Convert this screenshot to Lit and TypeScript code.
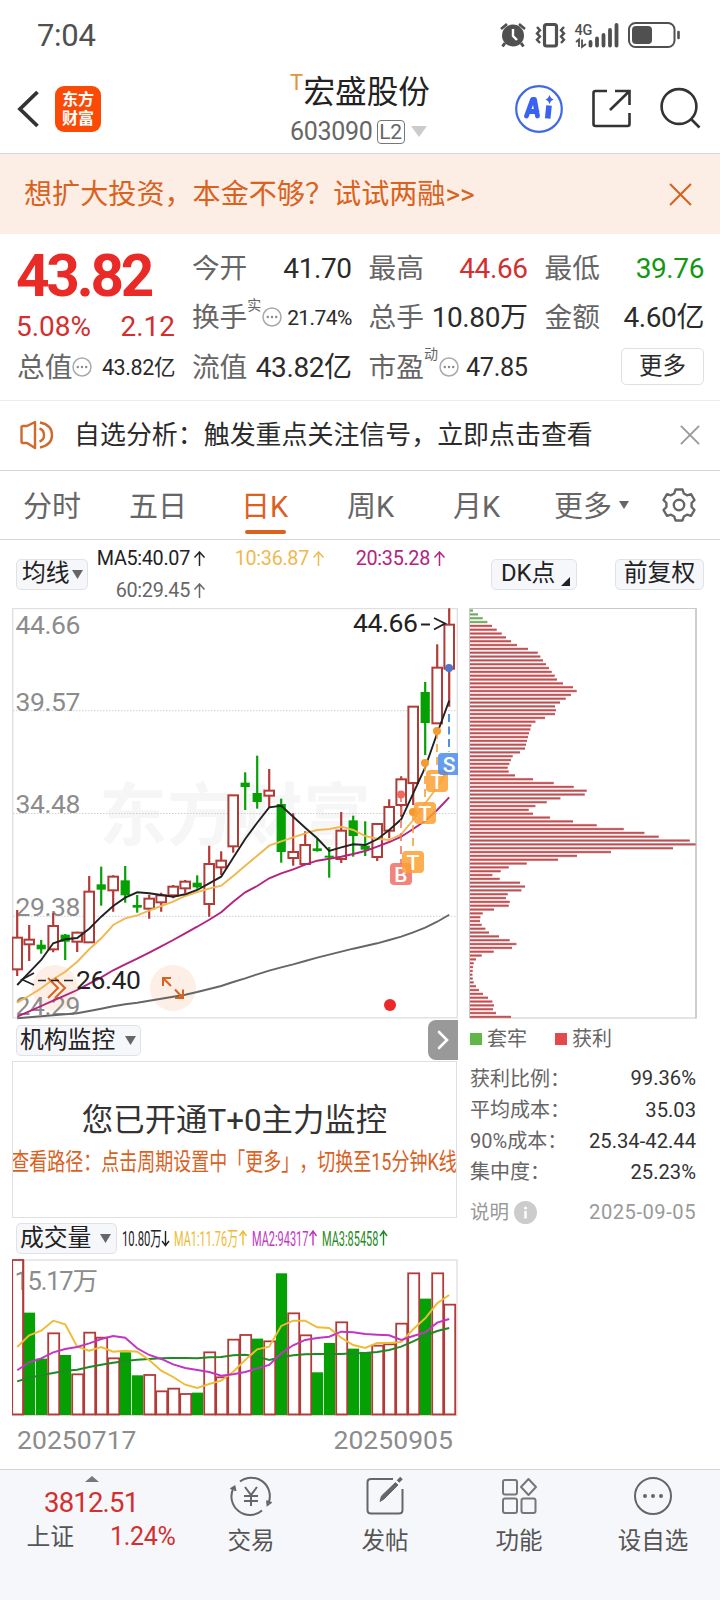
import { LitElement, html, svg, css } from "lit";
import { customElement } from "lit/decorators.js";

type Candle = [high: number, top: number, bottom: number, low: number, up: 0 | 1];

// Candle geometry in thirds of a pixel below y = 600.
const CANDLES: Candle[] = [
  [930, 1013, 1108, 1128, 1], [975, 1019, 1033, 1083, 1], [1020, 1034, 1048, 1061, 0],
  [938, 978, 1048, 1057, 1], [1002, 1004, 1025, 1080, 0], [995, 998, 1025, 1056, 1],
  [828, 875, 1027, 1027, 1], [800, 853, 869, 917, 0], [826, 830, 871, 935, 1],
  [798, 841, 886, 908, 0], [885, 915, 923, 938, 0], [884, 896, 926, 956, 1],
  [878, 886, 907, 935, 1], [855, 860, 886, 895, 1], [840, 845, 865, 880, 1],
  [826, 848, 862, 866, 0], [737, 792, 912, 950, 1], [754, 782, 802, 825, 1],
  [586, 586, 739, 758, 1], [517, 548, 561, 630, 0], [467, 579, 606, 626, 0],
  [507, 572, 587, 622, 1], [596, 612, 756, 788, 0], [640, 756, 774, 797, 1],
  [694, 735, 792, 795, 1], [715, 745, 753, 755, 0], [741, 767, 773, 833, 0],
  [636, 692, 777, 789, 1], [647, 661, 708, 770, 0], [664, 737, 749, 768, 0],
  [672, 672, 771, 783, 1], [598, 621, 692, 715, 1], [529, 538, 615, 650, 1],
  [320, 320, 549, 615, 1], [246, 276, 369, 465, 0], [133, 203, 370, 370, 1],
  [25, 74, 206, 320, 1],
];

const MA5 = [1155, 1117, 1080, 1030, 1018, 1014, 986, 950, 918, 893, 877, 880, 885, 890, 883, 870, 850, 830, 773, 717, 668, 622, 617, 650, 683, 715, 753, 742, 733, 735, 718, 690, 658, 580, 502, 400, 302];
const MA10 = [1208, 1187, 1165, 1138, 1115, 1085, 1048, 1015, 975, 955, 946, 932, 918, 905, 888, 876, 866, 857, 828, 797, 767, 737, 724, 712, 700, 690, 687, 680, 690, 708, 716, 720, 703, 660, 610, 562, 500];
const MA20 = [1250, 1234, 1218, 1202, 1186, 1170, 1151, 1132, 1111, 1093, 1076, 1058, 1039, 1020, 1000, 980, 959, 937, 905, 877, 858, 835, 820, 808, 794, 782, 776, 770, 762, 753, 740, 726, 710, 687, 662, 630, 592];
const MA60 = [1255, 1252, 1249, 1246, 1243, 1240, 1233, 1226, 1219, 1213, 1208, 1202, 1196, 1190, 1184, 1176, 1167, 1158, 1146, 1135, 1123, 1112, 1102, 1093, 1083, 1073, 1064, 1055, 1046, 1038, 1030, 1020, 1010, 997, 983, 965, 944];

const PROFILE = [
  39, 54, 68, 82, 96, 110, 125, 138, 153, 171, 204, 233, 241, 249, 258, 267, 275, 284, 291, 309,
  339, 350, 333, 317, 300, 285, 288, 285, 255, 226, 214, 211, 207, 204, 201, 198, 195, 180, 158, 153,
  148, 143, 146, 165, 219, 281, 341, 380, 374, 301, 260, 226, 206, 219, 270, 339, 410, 491, 553, 596,
  689, 707, 639, 453, 351, 294, 200, 146, 122, 97, 119, 180, 195, 184, 143, 138, 149, 146, 102, 68,
  61, 60, 65, 76, 87, 117, 149, 169, 156, 101, 65, 48, 41, 39, 38, 37, 38, 41, 48, 57,
  69, 84, 97, 102, 99, 108, 153,
];

// Volume bar tops in thirds of a pixel below y = 1250.
const VOLUME = [30, 190, 328, 250, 317, 373, 248, 263, 325, 309, 378, 375, 424, 416, 432, 430, 307, 382, 269, 255, 268, 274, 72, 190, 256, 369, 281, 217, 298, 308, 287, 283, 221, 70, 148, 70, 164];
const VOL_DOWN = new Set([1, 2, 4, 9, 10, 15, 20, 22, 25, 26, 28, 29, 34]);
const VMA1 = [291, 256, 242, 212, 223, 290, 302, 291, 305, 302, 305, 330, 362, 381, 404, 414, 402, 392, 365, 330, 298, 290, 228, 212, 212, 232, 234, 263, 285, 294, 279, 279, 276, 238, 205, 160, 135];
const VMA2 = [361, 337, 325, 307, 297, 291, 280, 267, 258, 263, 295, 315, 327, 343, 354, 360, 366, 377, 373, 366, 355, 345, 310, 286, 270, 264, 260, 245, 247, 252, 254, 256, 270, 258, 247, 218, 207];
const VMA3 = [394, 383, 376, 369, 362, 359, 351, 344, 338, 333, 329, 327, 325, 324, 324, 325, 322, 321, 316, 314, 320, 330, 322, 316, 313, 312, 312, 312, 310, 309, 306, 300, 290, 274, 257, 243, 234];

const cx = (i: number) => 17.2 + 12 * i;
const line = (ys: number[], base: number) =>
  ys.map((y, i) => `${cx(i).toFixed(1)},${(base + y / 3).toFixed(1)}`).join(" ");

const RED = "#b23b38";
const GREEN = "#04a004";

const base = css`
  * { box-sizing: border-box; }
  svg { display: block; flex: none; }
  text { font-family: Roboto, "Noto Sans CJK SC", sans-serif; }
`;

@customElement("kline-chart")
class KlineChart extends LitElement {
  static styles = [base, css`
    :host { display: block; }
    .axis { font-size: 26.5px; fill: #8c8c8c; }
    .mark { font-size: 26.5px; fill: #222; }
    .water { font-size: 68px; font-weight: 700; fill: #f6f6f7; }
    .tag { font-size: 21px; font-weight: 500; fill: #fff; text-anchor: middle; }
  `];

  private candle([h, t, b, l, up]: Candle, i: number) {
    const x = cx(i);
    const Y = (v: number) => 600 + v / 3;
    if (!up) {
      return svg`<path d="M${x} ${Y(h)}V${Y(l)}" stroke=${GREEN} stroke-width="2.200"/>
        <rect x=${x - 4.6} y=${Y(t)} width="9.2" height=${Y(b) - Y(t)} fill=${GREEN}/>`;
    }
    return svg`<path d="M${x} ${Y(h)}V${Y(t)}M${x} ${Y(b)}V${Y(l)}" stroke=${RED} stroke-width="2.200"/>
      <rect x=${x - 4.8} y=${Y(t)} width="9.6" height=${Math.max(Y(b) - Y(t), 1)} fill="#fff" stroke=${RED} stroke-width="2"/>`;
  }

  private tag(x: number, y: number, c: string, t: string) {
    return svg`<rect x=${x - 11} y=${y - 11} width="22" height="22" rx="4" fill=${c} fill-opacity=".85"/>
      <text class="tag" x=${x} y=${y + 7.5}>${t}</text>`;
  }

  render() {
    return html`<svg width="446" height="412" viewBox="12 608 446 412" fill="none">
      <text class="water" x="99" y="840" textLength="272">东方财富</text>
      <rect x="12.7" y="608.5" width="444.6" height="409.3" stroke="#e0e0e0" stroke-width="1.4"/>
      ${[710.7, 813.5, 916.3].map((y) => svg`<path d="M13 ${y}H457" stroke="#cfcfcf" stroke-dasharray="1.5 1.5"/>`)}
      <circle cx="55" cy="988" r="23" fill="#fdeee6"/>
      <circle cx="173" cy="988" r="23" fill="#fdeee6"/>
      ${["44.66", "39.57", "34.48", "29.38", "24.29"].map((t, i) =>
        svg`<text class="axis" x="15.500" y=${[634, 711, 813, 916, 1015][i]} textLength="65">${t}</text>`)}
      ${CANDLES.map((c, i) => this.candle(c, i))}
      <polyline points=${line(MA60, 600)} stroke="#666" stroke-width="1.9"/>
      <polyline points=${line(MA20, 600)} stroke="#b3237f" stroke-width="1.9"/>
      <polyline points=${line(MA10, 600)} stroke="#f0b850" stroke-width="1.9"/>
      <polyline points=${line(MA5, 600)} stroke="#222" stroke-width="1.9"/>
      <path d="M48 978L58 988L48 998M55 978L65 988L55 998" stroke="#d9621f" stroke-width="2"/>
      <path d="M171 986L163 978M163 986V978H171M175 989.500L183 998M183 989.500V998H175" stroke="#d9621f" stroke-width="2"/>
      <path d="M34 973L22 979.500L34 985M38 980.500H46M51 980.500H59M64 980.500H73" stroke="#222" stroke-width="1.7"/>
      <text class="mark" x="76" y="988.500" textLength="65">26.40</text>
      <text class="mark" x="353" y="632" textLength="65">44.66</text>
      <path d="M421 624.500H430M434 618L445 623.500L434 629.500" stroke="#222" stroke-width="1.9"/>
      <path d="M401 794V864" stroke="#ea7468" stroke-width="1.6" stroke-dasharray="8 5"/>
      <path d="M413 812V852M425 763V802M437 731V770" stroke="#f2a03c" stroke-width="1.6" stroke-dasharray="8 5"/>
      <path d="M449 714V752" stroke="#5090dd" stroke-width="2" stroke-dasharray="8 4.500"/>
      <circle cx="401" cy="794.500" r="4" fill="#f0695e"/>
      <circle cx="413" cy="812" r="4" fill="#f59a2c"/>
      <circle cx="425" cy="763" r="4" fill="#f59a2c"/>
      <circle cx="437" cy="731" r="4" fill="#f59a2c"/>
      <circle cx="449" cy="668" r="4" fill="#4f74c8"/>
      ${this.tag(401, 874, "#ee7064", "B")}
      ${this.tag(413, 862, "#fda033", "T")}
      ${this.tag(425, 813, "#fda033", "T")}
      ${this.tag(437, 781, "#fda033", "T")}
      ${this.tag(449, 764, "#4b8ceb", "S")}
      <circle cx="390" cy="1005" r="6" fill="#ec2828"/>
    </svg>`;
  }
}

@customElement("cost-profile")
class CostProfile extends LitElement {
  static styles = [base, css`:host { display: block; }`];
  render() {
    return html`<svg width="229" height="412" viewBox="469 608 229 412" fill="none">
      <path d="M696 608V1018.500" stroke="#c9c9cb" stroke-width="1.8"/>
      <path d="M696 608.500H469.500V1018H696" stroke="#c9c9cb" stroke-width="1"/>
      ${PROFILE.map((v, i) => {
        const y = 610.5 + (i * 11.5) / 3;
        const w = (v - 30) / 3;
        return svg`<rect x="470" y=${y - 1.3} width=${w} height="2.700" fill=${i < 4 ? "#b9dcae" : "#eeb4b4"}/>
          <rect x="470" y=${y - 0.8} width=${w} height="1.700" fill=${i < 4 ? "#74a866" : "#bd5054"}/>`;
      })}
    </svg>`;
  }
}

@customElement("volume-chart")
class VolumeChart extends LitElement {
  static styles = [base, css`
    :host { display: block; }
    .axis { font-size: 25.5px; fill: #8c8c8c; }
  `];
  render() {
    return html`<svg width="446" height="157" viewBox="12 1259 446 157" fill="none">
      <rect x="12.7" y="1260" width="444.300" height="155" stroke="#e0e0e0" stroke-width="1.4"/>
      <path d="M12 1415.200H457" stroke="#ecc9c5"/>
      ${VOLUME.map((v, i) => {
        const y = 1250 + v / 3;
        const x = cx(i) + 0.3;
        return VOL_DOWN.has(i)
          ? svg`<rect x=${x - 5.6} y=${y - 0.7} width="11.200" height=${1415 - y + 0.7} fill=${GREEN}/>`
          : svg`<rect x=${x - 5.3} y=${y} width="11" height=${1414.4 - y} fill="#fff" stroke=${RED} stroke-width="1.800"/>`;
      })}
      <text class="axis" x="14.500" y="1289.500" textLength="83.500">15.17万</text>
      <path d="M23.300 1260V1415" stroke=${RED} stroke-width="1.800"/>
      <polyline points=${line(VMA3, 1250)} stroke="#1f8a24" stroke-width="1.900"/>
      <polyline points=${line(VMA1, 1250)} stroke="#eebb33" stroke-width="1.900"/>
      <polyline points=${line(VMA2, 1250)} stroke="#c235c2" stroke-width="1.900"/>
    </svg>`;
  }
}

const dots = html`<svg class="dots" width="20" height="20" viewBox="0 0 20 20">
  <circle cx="10" cy="10" r="9" fill="none" stroke="#aaa" stroke-width="1.5"/>
  <circle cx="5.800" cy="10" r="1.200" fill="#888"/><circle cx="10" cy="10" r="1.200" fill="#888"/><circle cx="14.200" cy="10" r="1.200" fill="#888"/>
</svg>`;

@customElement("app-root")
class AppRoot extends LitElement {
  static styles = [base, css`
    :host { display: block; width: 720px; height: 1600px; background: #fff; overflow: hidden; position: relative;
      font-family: Roboto, "Noto Sans CJK SC", sans-serif; color: #2b2b2b; line-height: 1; white-space: nowrap; }
    .page { display: flex; flex-direction: column; height: 1600px; }
    .row { display: flex; align-items: center; }
    .between { display: flex; align-items: center; justify-content: space-between; }
    .red { color: #d32f2f; } .green { color: #139813; }

    .status { height: 68px; padding: 2px 38px 0 37px; color: #505050; font-size: 31px; letter-spacing: -.3px; }

    .header { height: 86px; border-bottom: 1px solid #d6d6d6; display: grid; grid-template-columns: 290px 1fr 222px; padding-top: 3px; }
    .left { display: flex; align-items: center; padding-left: 17px; height: 75px; gap: 15px; }
    .logo { width: 46px; height: 46px; border-radius: 9px; background: #fb4a05; color: #fff; font-size: 16px; font-weight: 700;
      line-height: 19px; text-align: center; padding-top: 4px; white-space: normal; }
    .name { display: flex; font-size: 31.600px; line-height: 36px; color: #222; padding-top: 4px; }
    .name i { font-style: normal; font-size: 22px; line-height: 16px; color: #e8923a; width: 13.500px; }
    .code { display: flex; align-items: center; font-size: 25px; color: #666; height: 41px; letter-spacing: -.3px; }
    .l2 { border: 1.500px solid #777; border-radius: 4px; font-size: 21px; width: 28px; height: 24px; line-height: 22px; text-align: center; margin: 0 6px 0 4px; }
    .tools { display: flex; align-items: center; gap: 27px; height: 75px; padding-left: 16px; }

    .banner { height: 80px; background: #fdeee5; color: #d9621f; font-size: 28.100px; padding: 0 28px 0 24px; }
    .banner span { padding-top: 3px; }

    .quotes { height: 167px; border-bottom: 1px solid #ececec; padding: 10px 16px 0 17px; display: grid;
      grid-template-columns: 158px 159.800px 159px 1fr; column-gap: 16.900px; grid-template-rows: 49.500px 49.500px 49.500px; }
    .price { grid-row: span 2; padding-top: 7px; }
    .big { font-size: 58.500px; font-weight: 700; color: #e92a27; letter-spacing: -3.200px; line-height: 50px; margin-left: -1px; }
    .chg { font-size: 28px; line-height: 51px; }
    .chg span { margin-left: -1px; }
    .cell { display: flex; align-items: center; font-size: 28px; }
    .cell b { font-weight: 400; margin-left: auto; letter-spacing: -.4px; }
    .cell span { color: #666; font-size: 27.700px; }
    .cell sup { font-size: 14px; color: #666; align-self: flex-start; margin: 4px 0 0; width: 15px; line-height: 14px; }
    .cell svg { margin-top: -2px; }
    .cell b.s22 { font-size: 21.500px; } .cell b.s21 { font-size: 21px; letter-spacing: -.6px; } .cell b.s25 { font-size: 25.300px; }
    .more { justify-self: end; align-self: center; width: 83px; height: 37px; border: 1.500px solid #e0e0e0; border-radius: 5px;
      font-size: 23.500px; line-height: 34px; text-align: center; margin-top: -2px; }

    .notice { height: 70px; border-bottom: 1px solid #d6d6d6; padding: 0 20px 2px 20px; font-size: 25.950px; }
    .notice .msg { flex: 1; margin-left: 20px; padding-top: 2px; }

    .tabs { height: 69px; border-bottom: 1px solid #d6d6d6; display: flex; align-items: center; font-size: 29px; color: #666; padding-left: 23px; }
    .tabs span { flex: none; padding-top: 4px; }
    .t1 { width: 106px; } .t2 { width: 112px; } .t3 { width: 106px; color: #d9621f; position: relative; }
    .t3::after { content: ""; position: absolute; left: 4px; bottom: -12px; width: 41px; height: 4px; border-radius: 2px; background: #d9621f; }
    .t4 { width: 106px; } .t5 { width: 101px; } .t6 { width: 65px; }

    .btn { border: 1.500px solid #e0e2e6; border-radius: 5px; background: #f6f7fa; height: 31px; display: flex; align-items: center;
      font-size: 23.800px; color: #222; flex: none; }
    .mas { height: 68px; padding: 0 16px; display: flex; align-items: center; }
    .vals { display: grid; grid-template-columns: 119px 121px 96px; row-gap: 12px; font-size: 19.800px; letter-spacing: -.3px; width: 393px; padding: 2px 0 0 9px; color: #222; }
    .vals span { display: flex; gap: 3px; width: 109px; justify-content: flex-end; }
    .vals svg { margin-top: 2px; }
    .yel { color: #eeb94f; } .mag { color: #b3237f; } .gry { color: #666; }

    .body { display: grid; grid-template-columns: 446px 229px; column-gap: 11px; padding-left: 12px; }
    .inst { height: 41px; padding-left: 4px; }
    .next { width: 30px; height: 40px; background: #999; border-radius: 8px 0 0 8px; display: grid; place-items: center; margin-top: -1px; }
    .promo { height: 157px; border: 1.500px solid #e0e0e0; display: flex; flex-direction: column; align-items: center; overflow: hidden; width: 445px; }
    .promo h2 { font-weight: 400; font-size: 31.400px; line-height: 36px; margin: 41px 0 0; color: #333; }
    .promo p { font-size: 24px; line-height: 30px; margin: 8px 0 0; color: #d9621f; transform: scaleX(.75); text-spacing-trim: space-all; }
    .volhead { height: 41px; padding-left: 4px; }
    .cond text { font-size: 20.500px; }
    .dates { padding: 8px 5px 0 5px; align-items: flex-start; font-size: 26.500px; color: #8c8c8c; letter-spacing: .05px; line-height: 32px; height: 53px; }

    .side { font-size: 20px; color: #666; width: 227px; padding-left: 1px; }
    .legend { height: 38px; gap: 5px; }
    .legend i { width: 12px; height: 12px; background: #5fb748; }
    .legend i.r { background: #e5484a; margin-left: 23px; }
    .stats { padding-top: 5px; }
    .stat { height: 31.200px; }
    .stat b { font-weight: 400; color: #333; font-size: 20.200px; }
    .stat.note { height: 49px; color: #999; font-size: 19.500px; }
    .stat.note b { color: #999; letter-spacing: .5px; }
    .note svg { margin-left: 5px; }

    .bar { margin-top: auto; height: 131px; background: #f6f7fa; border-top: 1.500px solid #d4d5d8; display: grid; grid-template-columns: 184px repeat(4, 134px); }
    .index { display: flex; flex-direction: column; align-items: center; padding-top: 6px; }
    .index .pt { font-size: 27.500px; letter-spacing: -.8px; line-height: 30px; margin-top: 6px; width: 96px; }
    .index .ln { width: 149px; font-size: 23.800px; line-height: 36px; color: #555; display: flex; justify-content: space-between; margin-left: 18px; padding-top: 1px; }
    .index .ln .red { font-size: 25px; letter-spacing: -.3px; }
    .nav { display: flex; flex-direction: column; align-items: center; padding-top: 6px; font-size: 23.500px; color: #555; gap: 12px; }
    .nav span { line-height: 26px; }
  `];

  private up(c: string) {
    return html`<svg width="13" height="15" viewBox="0 0 13 15" fill="none" stroke=${c} stroke-width="1.500"><path d="M6.500 15V1M1.500 6.500L6.500 1L11.500 6.500"/></svg>`;
  }

  private tri(w: number, h: number, c: string) {
    return html`<svg width=${w} height=${h} viewBox="0 0 10 10" preserveAspectRatio="none"><path d="M0 0H10L5 10Z" fill=${c}/></svg>`;
  }

  private cond(x: number, k: number, c: string, t: string) {
    return svg`<text transform="translate(${x} 18.5) scale(${k} 1)" fill=${c}>${t}</text>`;
  }

  private close(c: string, s: number) {
    return html`<svg width=${s} height=${s} viewBox="0 0 22 22" stroke=${c} stroke-width="2"><path d="M1 1L21 21M21 1L1 21"/></svg>`;
  }

  render() {
    return html`<div class="page">
      <div class="status between">
        <span>7:04</span>
        <svg width="183" height="30" viewBox="499 19 183 30" fill="none">
          <circle cx="513" cy="34.500" r="11" fill="#505050"/>
          <path d="M501 28L507 23M525 28L519 23" stroke="#505050" stroke-width="2.600"/>
          <path d="M505 42L502.500 45.500M521 42L523.500 45.500" stroke="#505050" stroke-width="3"/>
          <path d="M513 28V35L517 39" stroke="#fff" stroke-width="2.400"/>
          <rect x="544.500" y="23.500" width="12" height="21.500" rx="2" stroke="#505050" stroke-width="3.200"/>
          <path d="M537 26l3 3.200l-3 3.200l3 3.200l-3 3.200l3 3.200M564 26l-3 3.200l3 3.200l-3 3.200l3 3.200l-3 3.200" stroke="#505050" stroke-width="2.400"/>
          <text x="574.500" y="33.500" font-size="15.500" font-weight="500" fill="#505050" textLength="17.500" lengthAdjust="spacingAndGlyphs">4G</text>
          <path d="M576 41L579 38.500V46M582 38.500V46L586 43" stroke="#505050" stroke-width="1.800"/>
          <path d="M590.500 41V44.500M597 37.500V44.500M603.500 34V44.500M610 29V44.500M616.500 24V44.500" stroke="#505050" stroke-width="3.800" stroke-linecap="round"/>
          <rect x="629" y="22" width="45.500" height="24" rx="6.500" stroke="#505050" stroke-width="2"/>
          <rect x="632" y="25" width="20" height="18" rx="4" fill="#505050"/>
          <path d="M678.500 31V37" stroke="#505050" stroke-width="2.600" stroke-linecap="round"/>
        </svg>
      </div>

      <div class="header">
        <div class="left">
          <svg width="23" height="38" viewBox="0 0 23 38" fill="none" stroke="#333" stroke-width="3.800"><path d="M20.500 2L3 19L20.500 36"/></svg>
          <div class="logo">东方<br>财富</div>
        </div>
        <div>
          <div class="name"><i>T</i>宏盛股份</div>
          <div class="code">603090<span class="l2">L2</span>${this.tri(16, 11, "#ccc")}</div>
        </div>
        <div class="tools">
          <svg width="50" height="50" viewBox="514 84 50 50" fill="none">
            <circle cx="539" cy="109" r="22.800" stroke="#3f68e6" stroke-width="2.200"/>
            <path d="M526.500 116L532.500 99.500H534.500L537.500 116M529 111.500H537" stroke="#3a62f0" stroke-width="4.800" stroke-linejoin="round" stroke-linecap="round"/>
            <path d="M549 105.500L547.700 118.500" stroke="#3a62f0" stroke-width="5.600"/>
            <path d="M549.500 95L551 98L553.500 99.500L551 101L549.500 104L548 101L545.500 99.500L548 98Z" fill="#3a62f0"/>
          </svg>
          <svg width="41" height="41" viewBox="0 0 41 41" fill="none" stroke="#333" stroke-width="2.600">
            <path d="M16 3H4.500Q2.500 3 2.500 5V36Q2.500 38 4.500 38H36.500Q38.500 38 38.500 36V25M24 3H38.500V17M38 3.500L19 22"/>
          </svg>
          <svg width="43" height="43" viewBox="0 0 43 43" fill="none" stroke="#333" stroke-width="2.600">
            <circle cx="20" cy="19.500" r="17.400"/><path d="M31.500 31.500L40.500 40.500"/>
          </svg>
        </div>
      </div>

      <div class="banner between"><span>想扩大投资，本金不够？试试两融&gt;&gt;</span>${this.close("#d9621f", 23)}</div>

      <div class="quotes">
        <div class="price">
          <div class="big">43.82</div>
          <div class="chg red between"><span>5.08%</span><span>2.12</span></div>
        </div>
        <div class="cell"><span>今开</span><b>41.70</b></div>
        <div class="cell"><span>最高</span><b class="red">44.66</b></div>
        <div class="cell"><span>最低</span><b class="green">39.76</b></div>
        <div class="cell"><span>换手</span><sup>实</sup>${dots}<b class="s21">21.74%</b></div>
        <div class="cell"><span>总手</span><b>10.80万</b></div>
        <div class="cell"><span>金额</span><b>4.60亿</b></div>
        <div class="cell"><span>总值</span>${dots}<b class="s22">43.82亿</b></div>
        <div class="cell"><span>流值</span><b>43.82亿</b></div>
        <div class="cell"><span>市盈</span><sup>动</sup>${dots}<b class="s25">47.85</b></div>
        <div class="more">更多</div>
      </div>

      <div class="notice row">
        <svg width="34" height="30" viewBox="0 0 34 30" fill="none" stroke="#cf6a2c" stroke-width="2.400">
          <path d="M1.500 7.500Q1.500 6 3 6H7L15 2V28L7 23H3Q1.500 23 1.500 21.500Z" stroke-linejoin="round"/>
          <path d="M19.500 8.500Q24 10 24 15T19.500 21.500M20 2.500Q32 5 32 15T20 27.500"/>
        </svg>
        <span class="msg">自选分析：触发重点关注信号，立即点击查看</span>
        ${this.close("#999", 20)}
      </div>

      <div class="tabs">
        <span class="t1">分时</span><span class="t2">五日</span><span class="t3">日K</span><span class="t4">周K</span>
        <span class="t5">月K</span><span class="t6">更多</span>${this.tri(10, 8, "#666")}
        <svg width="36" height="36" viewBox="-18 -18 36 36" style="margin-left:32px" fill="none" stroke="#666" stroke-width="2.400" stroke-linejoin="round">
          <path d="M-3.500 -15.500H3.500L4.800 -11.500L8 -9.700L12 -10.800L15.500 -5L12.600 -2V2L15.500 5L12 10.800L8 9.700L4.800 11.500L3.500 15.500H-3.500L-4.800 11.500L-8 9.700L-12 10.800L-15.500 5L-12.600 2V-2L-15.500 -5L-12 -10.800L-8 -9.700L-4.800 -11.500Z"/>
          <circle r="5.200"/>
        </svg>
      </div>

      <div class="mas">
        <div class="btn" style="width:72px;padding-left:5px;gap:2px">均线${this.tri(11, 9, "#666")}</div>
        <div class="vals">
          <span>MA5:40.07${this.up("#222")}</span><span class="yel">10:36.87${this.up("#eeb94f")}</span><span class="mag">20:35.28${this.up("#b3237f")}</span>
          <span class="gry">60:29.45${this.up("#666")}</span>
        </div>
        <div class="btn" style="width:86px;margin-left:10px;padding-left:9px">DK点
          <svg width="9" height="9" viewBox="0 0 9 9" style="margin:14px 0 0 6px"><path d="M9 0V9H0Z" fill="#222"/></svg></div>
        <div class="btn" style="width:89px;margin-left:auto;justify-content:center">前复权</div>
      </div>

      <div class="body">
        <div>
          <kline-chart></kline-chart>
          <div class="inst between">
            <div class="btn" style="width:125px;padding-left:3px;gap:10px">机构监控${this.tri(11, 9, "#666")}</div>
            <div class="next"><svg width="14" height="20" viewBox="0 0 14 20" fill="none" stroke="#fff" stroke-width="2.600" stroke-linecap="round"><path d="M3 2L11 10L3 18"/></svg></div>
          </div>
          <div class="promo"><h2>您已开通T+0主力监控</h2><p>查看路径：点击周期设置中「更多」，切换至15分钟K线</p></div>
          <div class="volhead row">
            <div class="btn" style="width:101px;padding-left:3px;gap:9px">成交量${this.tri(11, 9, "#666")}</div>
            <svg class="cond" width="280" height="24" viewBox="117 0 280 24">
              ${this.cond(122, 0.55, "#222", "10.80万")}${this.cond(174, 0.535, "#eebb33", "MA1:11.76万")}
              ${this.cond(252, 0.535, "#c235c2", "MA2:94317")}${this.cond(322, 0.535, "#1f8a24", "MA3:85458")}
              <g fill="none" stroke-width="1.400">
                <path d="M165.500 4V18.500M162 14L165.500 18.500L169 14" stroke="#222"/>
                <path d="M243 18.500V4M239.500 9L243 4L246.500 9" stroke="#eebb33"/>
                <path d="M313 18.500V4M309.500 9L313 4L316.500 9" stroke="#c235c2"/>
                <path d="M383.500 18.500V4M380 9L383.500 4L387 9" stroke="#1f8a24"/>
              </g>
            </svg>
          </div>
          <volume-chart></volume-chart>
          <div class="dates between"><span>20250717</span><span>20250905</span></div>
        </div>

        <div>
          <cost-profile></cost-profile>
          <div class="side">
            <div class="legend row"><i></i>套牢<i class="r"></i>获利</div>
            <div class="stats">
              <div class="stat between"><span>获利比例：</span><b>99.36%</b></div>
              <div class="stat between"><span>平均成本：</span><b>35.03</b></div>
              <div class="stat between"><span>90%成本：</span><b>25.34-42.44</b></div>
              <div class="stat between"><span>集中度：</span><b>25.23%</b></div>
              <div class="stat note between"><span class="row">说明
                <svg width="23" height="23" viewBox="0 0 23 23"><circle cx="11.500" cy="11.500" r="11.500" fill="#ccc"/><circle cx="11.500" cy="7" r="1.500" fill="#fff"/><path d="M11.500 10V17.500" stroke="#fff" stroke-width="2.400"/></svg></span>
                <b>2025-09-05</b></div>
            </div>
          </div>
        </div>
      </div>

      <div class="bar">
        <div class="index">
          <svg width="14" height="6" viewBox="0 0 14 6"><path d="M0 6L7 0L14 6Z" fill="#777"/></svg>
          <div class="pt red">3812.51</div>
          <div class="ln"><span>上证</span><span class="red">1.24%</span></div>
        </div>
        <div class="nav">
          <svg width="44" height="40" viewBox="-22 -20 44 40" fill="none" stroke="#666" stroke-width="2">
            <path d="M-11 -14.500A18.500 18.500 0 0 1 17.500 7M11 14.500A18.500 18.500 0 0 1 -17.500 -8M-20.500 -7L-16.500 -9.500L-15.500 -5M20.500 6L16.500 9L16 4.500"/>
            <path d="M-6 -9L0 -1L6 -9M0 -1V10M-7 0H7M-7 5H7"/>
          </svg><span>交易</span>
        </div>
        <div class="nav">
          <svg width="44" height="40" viewBox="-22 -20 44 40" fill="none" stroke="#666" stroke-width="2">
            <path d="M8 -17H-14Q-17.500 -17 -17.500 -14V14Q-17.500 17.500 -14 17.500H14Q17.500 17.500 17.500 14V-7"/>
            <path d="M-5 5.500L-3.500 0L10.500 -13.500L13 -11L-1 3Z" fill="#666" stroke-width="1"/><path d="M13 -14.500L16.500 -18" stroke-width="3.500"/>
          </svg><span>发帖</span>
        </div>
        <div class="nav">
          <svg width="44" height="40" viewBox="-22 -20 44 40" fill="none" stroke="#777" stroke-width="2">
            <rect x="-16" y="-16" width="14" height="14.500" rx="2"/><rect x="-16" y="2.500" width="14" height="14.500" rx="2"/><rect x="2.500" y="2.500" width="14" height="14.500" rx="2"/>
            <path d="M9.500 -17L17 -9L9.500 -1L2 -9Z" stroke-linejoin="round"/>
          </svg><span>功能</span>
        </div>
        <div class="nav">
          <svg width="44" height="40" viewBox="-22 -20 44 40"><circle r="18" fill="none" stroke="#666" stroke-width="2"/>
            <circle cx="-8" r="2" fill="#666"/><circle r="2" fill="#666"/><circle cx="8" r="2" fill="#666"/></svg><span>设自选</span>
        </div>
      </div>
    </div>`;
  }
}
